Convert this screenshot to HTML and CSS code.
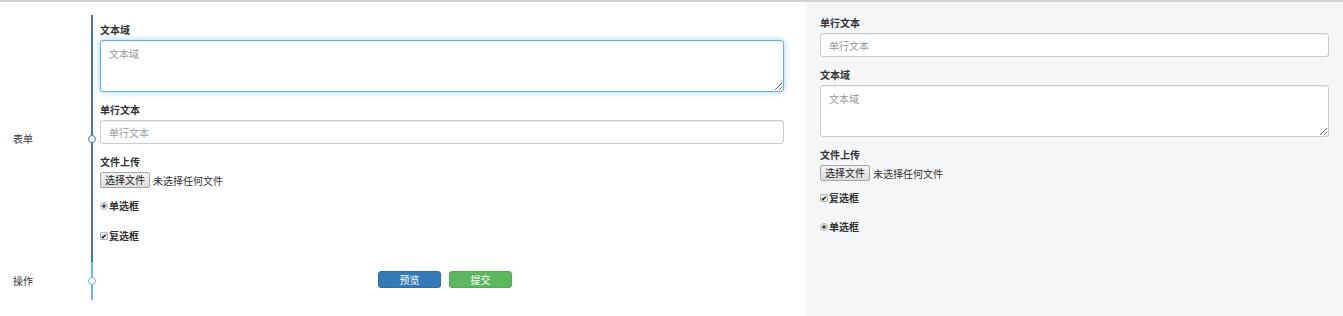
FILE: index.html
```html
<!DOCTYPE html>
<html lang="zh-CN">
<head>
    <meta charset="UTF-8">
    <meta name="viewport" content="width=device-width, initial-scale=1.0">
    <title>表单设计</title>
    <link rel="stylesheet" href="styles.css">
</head>
<body>
    <div class="page">
        <!-- Editor with timeline -->
        <div class="editor">
            <div class="step">
                <div class="step-title">表单</div>
                <div class="step-body">
                    <span class="dot"></span>
                    <div class="field">
                        <label>文本域</label>
                        <textarea class="control area is-focus" placeholder="文本域"></textarea>
                    </div>
                    <div class="field">
                        <label>单行文本</label>
                        <input class="control" type="text" placeholder="单行文本">
                    </div>
                    <div class="field file-field">
                        <label>文件上传</label>
                        <div class="file-input"><span class="file-btn">选择文件</span><span class="file-name">未选择任何文件</span></div>
                    </div>
                    <div class="choice choice-gap"><span class="radio"></span>单选框</div>
                    <div class="choice"><span class="check">✔</span>复选框</div>
                </div>
            </div>
            <div class="step step-actions">
                <div class="step-title">操作</div>
                <div class="step-body">
                    <span class="dot"></span>
                    <div class="actions">
                        <button class="btn btn-primary">预览</button>
                        <button class="btn btn-success">提交</button>
                    </div>
                </div>
            </div>
        </div>

        <!-- Preview -->
        <div class="preview">
            <div class="field">
                <label>单行文本</label>
                <input class="control" type="text" placeholder="单行文本">
            </div>
            <div class="field">
                <label>文本域</label>
                <textarea class="control area" placeholder="文本域"></textarea>
            </div>
            <div class="field file-field">
                <label>文件上传</label>
                <div class="file-input"><span class="file-btn">选择文件</span><span class="file-name">未选择任何文件</span></div>
            </div>
            <div class="choice choice-gap-r"><span class="check">✔</span>复选框</div>
            <div class="choice"><span class="radio"></span>单选框</div>
        </div>
    </div>
</body>
</html>
```

FILE: styles.css
```css
/* General */
* {
    margin: 0;
    padding: 0;
    box-sizing: border-box;
}

body {
    font-family: "Noto Sans CJK SC", "Liberation Sans", sans-serif;
    font-size: 10px;
    color: #333;
    background: #fff;
}

.page {
    display: flex;
    min-height: 100vh;
    border-top: 2px solid #d2d2d2;
}

/* Left editor */
.editor {
    width: 806px;
    padding-top: 13px;
}

.step {
    display: flex;
    align-items: center;
}

.step-title {
    width: 91px;
    padding-left: 13px;
    line-height: 14px;
}

.step-body {
    position: relative;
    flex: 1;
    align-self: stretch;
    border-left: 2px solid #337ab7;
    padding: 7px 22px 17px 7px;
}

.step-actions .step-body {
    border-left-color: #5bc0de;
    padding: 9px 22px 12px 7px;
}

.dot {
    position: absolute;
    left: -5px;
    top: 50%;
    width: 8px;
    height: 8px;
    margin-top: -4px;
    border: 1.5px solid #337ab7;
    border-radius: 50%;
    background: #fff;
}

.step-actions .dot {
    border-color: #5bc0de;
}

/* Form controls */
.field {
    margin-bottom: 10px;
}

.field label {
    display: block;
    font-weight: bold;
    line-height: 15px;
    margin-bottom: 3px;
}

.file-field {
    margin-bottom: 8px;
}

.editor .file-field {
    margin-bottom: 9px;
}

.control {
    display: block;
    width: 100%;
    height: 24px;
    padding: 4px 8px;
    border: 1px solid #ccc;
    border-radius: 3px;
    box-shadow: inset 0 1px 1px rgba(0, 0, 0, 0.075);
    font-family: inherit;
    font-size: 10px;
    color: #555;
    background: #fff;
    outline: none;
}

.control::placeholder {
    color: #999;
}

.area {
    height: 52px;
    padding: 5px 8px;
    resize: vertical;
}

.is-focus {
    border-color: #66afe9;
    box-shadow: inset 0 1px 1px rgba(0, 0, 0, 0.075), 0 0 6px rgba(102, 175, 233, 0.6);
}

.file-input {
    display: flex;
    align-items: center;
    height: 16px;
}

.file-btn {
    height: 16px;
    line-height: 14px;
    padding: 0 4px;
    border: 1px solid #a6a6a6;
    border-radius: 2px;
    background: linear-gradient(#f4f4f4, #dcdcdc);
    color: #222;
}

.file-name {
    margin-left: 3px;
    color: #333;
}

.choice {
    display: flex;
    align-items: center;
    line-height: 18px;
    font-weight: bold;
}

.choice-gap {
    margin-bottom: 12px;
}

.choice-gap-r {
    margin-bottom: 11px;
}

.radio {
    width: 8px;
    height: 8px;
    margin-right: 1px;
    border-radius: 50%;
    border: 1px solid #b5b5b5;
    background: radial-gradient(circle, #555 0, #555 1.5px, #e8e8e8 2px);
}

.check {
    width: 8px;
    height: 8px;
    margin-right: 1px;
    border: 1px solid #b5b5b5;
    border-radius: 1px;
    background: #ececec;
    font-size: 7px;
    line-height: 6px;
    text-align: center;
    color: #222;
}

/* Buttons */
.actions {
    display: flex;
    justify-content: center;
    gap: 8px;
    padding-left: 6px;
}

.btn {
    width: 63px;
    height: 17px;
    border: 1px solid transparent;
    border-radius: 3px;
    font-family: inherit;
    font-size: 10px;
    color: #fff;
    cursor: pointer;
}

.btn-primary {
    background: #337ab7;
    border-color: #2e6da4;
}

.btn-success {
    background: #5cb85c;
    border-color: #4cae4c;
}

/* Right preview */
.preview {
    flex: 1;
    background: #f5f6f8;
    padding: 13px 14px 0 14px;
}
```
